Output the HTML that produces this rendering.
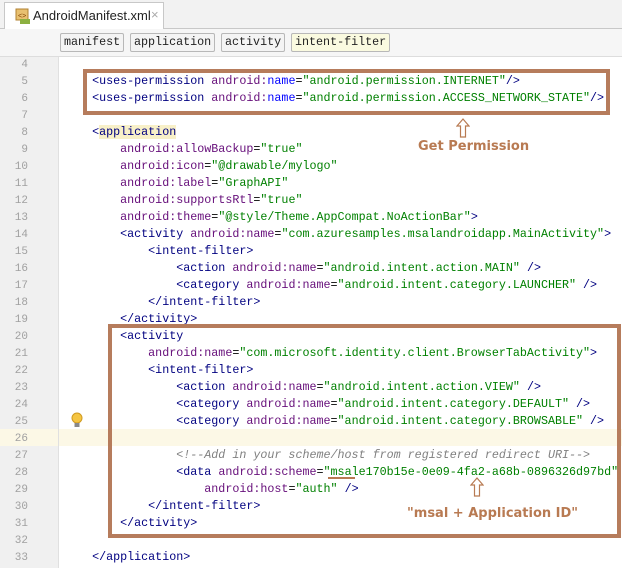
<!DOCTYPE html>
<html><head><meta charset="utf-8"><style>
body{margin:0;width:622px;height:568px;overflow:hidden;background:#fff;position:relative;font-family:"Liberation Mono",monospace;}
.tabbar{position:absolute;left:0;top:0;width:622px;height:28px;background:#f2f2f2;border-bottom:1px solid #c8c8c8;}
.tab{position:absolute;left:4px;top:2px;width:158px;height:26px;background:#fff;border:1px solid #c8c8c8;border-bottom:none;font-family:"Liberation Sans",sans-serif;font-size:13px;}
.crumbs{position:absolute;left:0;top:29px;width:622px;height:27px;background:#f6f6f6;border-bottom:1px solid #ddd;}
.cr{position:absolute;top:4px;height:17px;border:1px solid #b8b8b8;background:#f4f4f4;font-size:11.7px;line-height:17px;padding:0 3px;color:#222;border-radius:2px;}
.gutter{position:absolute;left:0;top:57px;width:58px;height:511px;background:#f0f0f0;}
.fold{position:absolute;left:58px;top:57px;width:1px;height:511px;background:#e0e0e0;}
.ln{position:absolute;left:0;width:28px;text-align:right;font-size:11px;color:#a0a0a0;}
.code{position:absolute;left:64px;white-space:pre;font-size:11.7px;color:#000;}
.t{color:#000080}.a{color:#660e7a}.b{color:#0000ff}.v{color:#008000}.c{color:#808080;font-style:italic}
.box{position:absolute;border:4px solid #b67c5c;}
.note{position:absolute;font-family:"DejaVu Sans",sans-serif;font-weight:bold;font-size:13px;color:#b87a52;}
</style></head><body>
<div class="tabbar"><div class="tab">
<svg style="position:absolute;left:10px;top:5px" width="16" height="16"><rect x="1" y="1" width="12" height="11" fill="#e8c070" stroke="#b08030"/><text x="3" y="10" font-size="7" fill="#804000">&lt;&gt;</text><rect x="5" y="11" width="10" height="5" fill="#8cb040"/></svg>
<span style="position:absolute;left:28px;top:5px;color:#222">AndroidManifest.xml</span><span style="position:absolute;left:146px;top:4px;color:#aaa">×</span></div></div>
<div class="crumbs">
<div class="cr" style="left:60px">manifest</div>
<div class="cr" style="left:130px">application</div>
<div class="cr" style="left:221px">activity</div>
<div class="cr" style="left:291px;background:#fafae0">intent-filter</div>
</div>
<div class="gutter"></div><div class="fold"></div>
<div style="position:absolute;left:0;top:429px;width:622px;height:17px;background:#fcf8e6"></div>
<div style="position:absolute;left:58px;top:429px;width:1px;height:17px;background:#e0e0e0"></div>
<div id="lines"></div>
<svg style="position:absolute;left:71px;top:412px" width="12" height="16"><circle cx="6" cy="6" r="5" fill="#f5c542" stroke="#d09a20"/><rect x="3.5" y="11" width="5" height="4" fill="#888"/></svg>
<div class="box" style="left:83px;top:69px;width:519px;height:38px"></div>
<div class="box" style="left:108px;top:324px;width:505px;height:206px"></div>
<svg style="position:absolute;left:456px;top:118px" width="14" height="20"><path d="M7 1 L13 8 L9.5 8 L9.5 19 L4.5 19 L4.5 8 L1 8 Z" fill="none" stroke="#b87a52" stroke-width="1.2"/></svg>
<div class="note" style="left:418px;top:139px">Get Permission</div>
<svg style="position:absolute;left:470px;top:477px" width="14" height="20"><path d="M7 1 L13 8 L9.5 8 L9.5 19 L4.5 19 L4.5 8 L1 8 Z" fill="none" stroke="#b87a52" stroke-width="1.2"/></svg>
<div class="note" style="left:407px;top:506px">"msal + Application ID"</div>
<div style="position:absolute;left:328px;top:477px;width:27px;height:2px;background:#b87a52"></div>
<script>
var L={4:'',5:'    <span class=t>&lt;uses-permission</span> <span class=a>android:</span><span class=b>name</span>=<span class=v>"android.permission.INTERNET"</span><span class=t>/&gt;</span>',
6:'    <span class=t>&lt;uses-permission</span> <span class=a>android:</span><span class=b>name</span>=<span class=v>"android.permission.ACCESS_NETWORK_STATE"</span><span class=t>/&gt;</span>',
7:'',8:'    <span class=t>&lt;<span style="background:#f8f0c8">application</span></span>',
9:'        <span class=a>android:allowBackup</span>=<span class=v>"true"</span>',
10:'        <span class=a>android:icon</span>=<span class=v>"@drawable/mylogo"</span>',
11:'        <span class=a>android:label</span>=<span class=v>"GraphAPI"</span>',
12:'        <span class=a>android:supportsRtl</span>=<span class=v>"true"</span>',
13:'        <span class=a>android:theme</span>=<span class=v>"@style/Theme.AppCompat.NoActionBar"</span><span class=t>&gt;</span>',
14:'        <span class=t>&lt;activity</span> <span class=a>android:name</span>=<span class=v>"com.azuresamples.msalandroidapp.MainActivity"</span><span class=t>&gt;</span>',
15:'            <span class=t>&lt;intent-filter&gt;</span>',
16:'                <span class=t>&lt;action</span> <span class=a>android:name</span>=<span class=v>"android.intent.action.MAIN"</span> <span class=t>/&gt;</span>',
17:'                <span class=t>&lt;category</span> <span class=a>android:name</span>=<span class=v>"android.intent.category.LAUNCHER"</span> <span class=t>/&gt;</span>',
18:'            <span class=t>&lt;/intent-filter&gt;</span>',
19:'        <span class=t>&lt;/activity&gt;</span>',
20:'        <span class=t>&lt;activity</span>',
21:'            <span class=a>android:name</span>=<span class=v>"com.microsoft.identity.client.BrowserTabActivity"</span><span class=t>&gt;</span>',
22:'            <span class=t>&lt;intent-filter&gt;</span>',
23:'                <span class=t>&lt;action</span> <span class=a>android:name</span>=<span class=v>"android.intent.action.VIEW"</span> <span class=t>/&gt;</span>',
24:'                <span class=t>&lt;category</span> <span class=a>android:name</span>=<span class=v>"android.intent.category.DEFAULT"</span> <span class=t>/&gt;</span>',
25:'                <span class=t>&lt;category</span> <span class=a>android:name</span>=<span class=v>"android.intent.category.BROWSABLE"</span> <span class=t>/&gt;</span>',
26:'',27:'                <span class=c>&lt;!--Add in your scheme/host from registered redirect URI--&gt;</span>',
28:'                <span class=t>&lt;data</span> <span class=a>android:scheme</span>=<span class=v>"msale170b15e-0e09-4fa2-a68b-0896326d97bd"</span>',
29:'                    <span class=a>android:host</span>=<span class=v>"auth"</span> <span class=t>/&gt;</span>',
30:'            <span class=t>&lt;/intent-filter&gt;</span>',
31:'        <span class=t>&lt;/activity&gt;</span>',32:'',33:'    <span class=t>&lt;/application&gt;</span>'};
var h='';for(var n=4;n<=33;n++){var y=56+(n-4)*17;h+='<div class="ln" style="top:'+(y+1)+'px;line-height:17px">'+n+'</div><div class="code" style="top:'+y+'px;line-height:17px">'+L[n]+'</div>';}
document.getElementById('lines').innerHTML=h;
</script>
</body></html>
